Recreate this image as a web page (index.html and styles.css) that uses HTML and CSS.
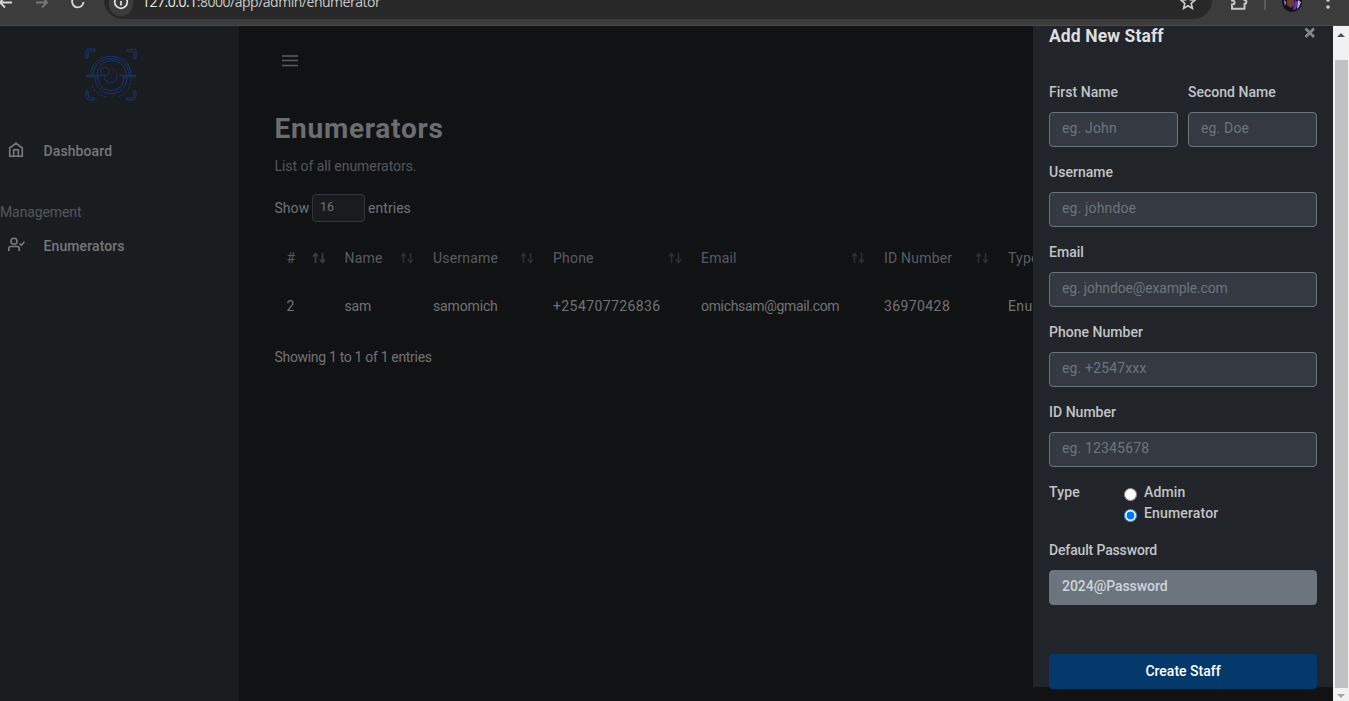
FILE: index.html
```
<!DOCTYPE html>
<html lang="en">
<head>
<meta charset="utf-8">
<title>Enumerators</title>
<link rel="stylesheet" href="styles.css">
</head>
<body>
<svg class="defs" width="0" height="0">
  <symbol id="sort" viewBox="0 0 14 12"><path d="M3.500 11V2M1 4.500 3.500 1.500 6 4.500"/><path class="down" d="M10.500 1v9M8 7.500l2.500 3 2.500-3"/></symbol>
</svg>
<header class="browser">
  <svg class="nav-icons" width="104" height="18" fill="none" stroke-width="1.900">
    <path stroke="#d5d5d5" d="M0 2.500H12M5-3 0 2.500l5 5"/>
    <path stroke="#777" d="M36 2.500H47M42-3l5 5.500-5 5"/>
    <path stroke="#d5d5d5" d="M83.500 2A5.700 5.700 0 1 1 77.500-4"/>
  </svg>
  <div class="address">
    <span class="info"><svg width="16" height="16" fill="none" stroke="#e3e3e3" stroke-width="1.700"><circle cx="8" cy="8" r="6.300"/><path d="M8 7v4.500M8 4v1.500"/></svg></span>
    <span class="url"><b>127.0.0.1</b>:8000/app/admin/enumerator</span>
    <svg class="star" width="18" height="18" fill="none" stroke="#d0d0d0" stroke-width="1.600"><path d="m9 2 2 4.700 5 .4-3.800 3.300 1.200 5L9 12.700l-4.400 2.700 1.200-5L2 7.100l5-.4z"/></svg>
  </div>
  <svg class="tools" width="137" height="18" fill="none">
    <path stroke="#c8c8c8" stroke-width="1.900" d="M20-3v3.500c3.500 0 3.500 4 0 4V8.700h12.500V3.800c2.500 0 2.500-3.800 0-3.800v-3"/>
    <path stroke="#656565" stroke-width="1.500" d="M53 0v10"/>
    <circle cx="80" cy="2" r="10" fill="#171019"/>
    <path fill="#713b31" d="M75 0h7v5l-3 3-4-3z"/>
    <path fill="#5c36b8" d="m83 0 3 2-2 7-3 1z"/><path fill="#b8a8df" d="m86 0 3 2-2 5-2 2zM72 0l2 2-1 4z"/>
    <circle cx="116" cy="0" r="1.800" fill="#d0d0d0"/><circle cx="116" cy="7" r="1.800" fill="#d0d0d0"/>
  </svg>
</header>
<div class="page">
  <aside class="sidebar">
    <svg class="logo" viewBox="0 0 54 54" fill="none" stroke="#14337c" stroke-width="1">
      <path d="M2 10V4q0-3 3-3h6v2H6Q4 3 4 6v4zM43 1.500h9v9h-2V6q0-2.500-2.500-2.500H43zM2 43v5q0 4 4 4h4v-2H7q-3 0-3-3v-4zM52 43v5q0 4-4 4h-5v-2h4q3 0 3-3v-4z"/>
      <path d="M7 27C7 2 47 2 47 27M9 27C10 5 44 5 45 27M13 27C13 8 42 8 42 27"/>
      <path d="M2 27.500h16M35 27.500h17M2 29h12M38 29h14M20 28c1 9 12 9 13 0"/>
      <circle cx="21" cy="23.500" r="4.300"/>
      <path d="M11 29c0 22 32 22 32 0M14 29c0 18 26 18 26 0"/>
      <path stroke-dasharray="3 1" d="M8 37q4 10 15 12M47 31q-1 14-13 18"/>
      <path stroke="#172b55" d="M27 21q5 0 6 6"/>
    </svg>
    <nav>
      <a class="item"><svg viewBox="0 0 17 16"><path d="M1.700 6 8 1.200 14.300 6v8.300H1.700zM5.700 14V7.800h4.600V14"/></svg><span>Dashboard</span></a>
      <div class="section">Management</div>
      <a class="item"><svg viewBox="0 0 17 16"><circle cx="6" cy="4.200" r="3"/><path d="M.8 14v-2.500q0-2 2-2h6.400q2 0 2 2V14M11.500 6.500l1.800 1.800 3.200-3.600"/></svg><span>Enumerators</span></a>
    </nav>
  </aside>
  <main class="content">
    <svg class="burger" width="16" height="12" stroke="#595d61" stroke-width="1.500"><path d="M0 1h16M0 5.500h16M0 10.500h16"/></svg>
    <h1>Enumerators</h1>
    <p class="sub">List of all enumerators.</p>
    <div class="length"><span>Show</span><span class="num">16</span><span>entries</span></div>
    <table>
      <colgroup><col class="c1"><col class="c2"><col class="c3"><col class="c4"><col class="c5"><col class="c6"><col class="c7"></colgroup>
      <thead><tr>
        <th><div>#<svg class="sort active"><use href="#sort"/></svg></div></th>
        <th><div>Name<svg class="sort"><use href="#sort"/></svg></div></th>
        <th><div>Username<svg class="sort"><use href="#sort"/></svg></div></th>
        <th><div>Phone<svg class="sort"><use href="#sort"/></svg></div></th>
        <th><div>Email<svg class="sort"><use href="#sort"/></svg></div></th>
        <th><div>ID Number<svg class="sort"><use href="#sort"/></svg></div></th>
        <th><div>Type</div></th>
      </tr></thead>
      <tbody><tr><td>2</td><td>sam</td><td>samomich</td><td class="digits">+254707726836</td><td class="mail">omichsam@gmail.com</td><td class="digits">36970428</td><td class="kind">Enumerator</td></tr></tbody>
    </table>
    <p class="showing">Showing 1 to 1 of 1 entries</p>
  </main>
  <section class="drawer">
    <div class="drawer-head"><h2>Add New Staff</h2><svg width="12" height="12" stroke="#85888b" stroke-width="2.600"><path d="m1.500 1.500 8.500 8.500M10 1.500 1.500 10"/></svg></div>
    <form>
      <div class="pair">
        <label class="field"><span>First Name</span><input placeholder="eg. John"></label>
        <label class="field"><span>Second Name</span><input placeholder="eg. Doe"></label>
      </div>
      <label class="field"><span>Username</span><input placeholder="eg. johndoe"></label>
      <label class="field"><span>Email</span><input class="tight" placeholder="eg. johndoe@example.com"></label>
      <label class="field"><span>Phone Number</span><input placeholder="eg. +2547xxx"></label>
      <label class="field"><span>ID Number</span><input placeholder="eg. 12345678"></label>
      <div class="type"><span>Type</span><div><label><input type="radio" name="type">Admin</label><label><input type="radio" name="type" checked>Enumerator</label></div></div>
      <label class="field"><span class="snug">Default Password</span><input class="readonly" value="2024@Password" readonly></label>
      <button type="button">Create Staff</button>
    </form>
  </section>
  <div class="scrollbar"><i class="arrow-up"></i><i class="thumb"></i><i class="arrow-down"></i></div>
</div>
</body>
</html>
```
FILE: styles.css
```
* { box-sizing: border-box; }
body { margin: 0; width: 1349px; height: 701px; overflow: hidden; background: #111214; color: #707275; font: 500 14px/21px Roboto, sans-serif; letter-spacing: .15px; }
h1, h2, p { margin: 0; }
.defs { position: absolute; }
.browser { height: 26px; display: flex; background: #3c3c3c; border-bottom: 1px solid #4a4a4a; overflow: hidden; }
.nav-icons { flex: none; }
.address { width: 1108px; height: 37px; margin-top: -18px; padding: 0 15px 0 5px; display: flex; align-items: center; background: #282828; border-radius: 19px; }
.info { width: 24px; height: 28px; margin-top: 2px; display: grid; place-items: center; border-radius: 14px; background: #3c3c3c; }
.url { margin: 3px auto 0 9px; font: 14px/20px "Open Sans", sans-serif; letter-spacing: -.48px; color: #c7c7c7; }
.url b { font-weight: 400; color: #e8e8e8; }
.star { margin-top: 2px; }
.page { position: relative; display: flex; height: 675px; }
.sidebar { width: 239px; flex: none; padding-top: 22px; background: #1a1d20; }
.logo { display: block; width: 54px; height: 54px; margin-left: 84px; }
nav { margin-top: 39px; }
.item { display: flex; height: 21px; align-items: center; color: #75777a; letter-spacing: .1px; }
.item svg { width: 17px; height: 16px; margin: -4px 18.500px 0 8px; fill: none; stroke: #797b7e; stroke-width: 1.600; }
.section { margin: 40px 0 13px; font-weight: 400; color: #53575a; letter-spacing: -.1px; }
.content { width: 794px; overflow: hidden; padding: 29px 0 0 35.500px; font-weight: 400; }
.burger { display: block; margin-left: 7px; }
h1 { margin-top: 45px; font: 700 28px/34px Roboto, sans-serif; letter-spacing: .75px; color: #6c6d6f; }
.sub { margin-top: 10px; color: #53575a; letter-spacing: -.05px; }
.length { height: 28px; margin-top: 17px; display: flex; align-items: center; gap: 4px; letter-spacing: .05px; }
.length > :first-child { width: 33.500px; }
.length > :last-child { margin-left: -1px; }
.num { width: 53px; height: 28px; padding: 1px 7px; border: 1px solid #33373b; border-radius: 4px; background: #191c1f; font-size: 12.500px; }
table { width: 850px; margin-top: 12px; table-layout: fixed; border-collapse: collapse; }
.c1 { width: 58px; } .c2 { width: 88.500px; } .c3 { width: 120px; } .c4 { width: 148px; } .c5 { width: 183px; } .c6 { width: 124px; }
th, td { height: 48px; padding: 0 7px 0 12px; text-align: left; font-weight: 400; white-space: nowrap; }
th { color: #585c60; letter-spacing: .2px; }
td { letter-spacing: -.15px; }
.digits { letter-spacing: .4px; }
.mail { letter-spacing: -.33px; }
.kind { letter-spacing: .4px; }
th div { display: flex; align-items: center; justify-content: space-between; }
.sort { width: 14px; height: 12px; flex: none; fill: none; stroke: #2d3033; stroke-width: 1.500; }
.active { stroke: #303336; }
.down { stroke: inherit; }
.active { stroke: #3d4043; stroke-width: 1.700; }
.showing { margin-top: 17px; letter-spacing: -.32px; }
.drawer { position: absolute; left: 1033px; top: 0; width: 300px; height: 661px; padding: 0 16px; background: #212428; color: #c2c4c7; }
.drawer-head { display: flex; justify-content: space-between; height: 56px; }
h2 { font: 700 17.500px/21px Roboto, sans-serif; letter-spacing: .1px; color: #dcdee1; }
.drawer-head svg { margin: 1px 1px 0 0; }
.pair { display: grid; grid-template-columns: 1fr 1fr; gap: 10px; }
.field { display: block; height: 80px; letter-spacing: .02px; }
.field span { display: block; height: 30px; padding-top: .4px; }
.field .snug { letter-spacing: -.15px; }
.field input { display: block; width: 100%; height: 35px; padding: 0 12px 3px; border: 1px solid #6c757d; border-radius: 4px; background: #343942; color: #ced4da; font: 400 14px Roboto, sans-serif; letter-spacing: .15px; outline: 0; }
.field input::placeholder { color: #6c757d; }
.field .tight { letter-spacing: -.16px; }
.field .readonly { background: #6c757d; font-weight: 500; letter-spacing: -.05px; }
.type { display: flex; height: 58px; }
.type > span { width: 75px; }
.type label { display: flex; height: 21px; align-items: center; }
.type input { width: 13px; height: 13px; margin: 4px 7px 0 0; }
button { width: 100%; height: 35px; margin-top: 34px; border: 0; border-radius: 4px; background: #05386b; color: #fff; font: 500 14px/21px Roboto, sans-serif; padding: 0 0 1px; }
.scrollbar { position: absolute; left: 1333px; top: 0; width: 16px; height: 675px; background: #f1f1f1; display: flex; flex-direction: column; align-items: center; }
.arrow-up { margin-top: 7px; border: 4px solid transparent; border-top: 0; border-bottom-color: #505050; }
.thumb { width: 13px; height: 628px; margin-top: 23px; background: #c1c1c1; }
.arrow-down { margin-top: 6px; border: 4px solid transparent; border-bottom: 0; border-top-color: #a3a3a3; }
```
